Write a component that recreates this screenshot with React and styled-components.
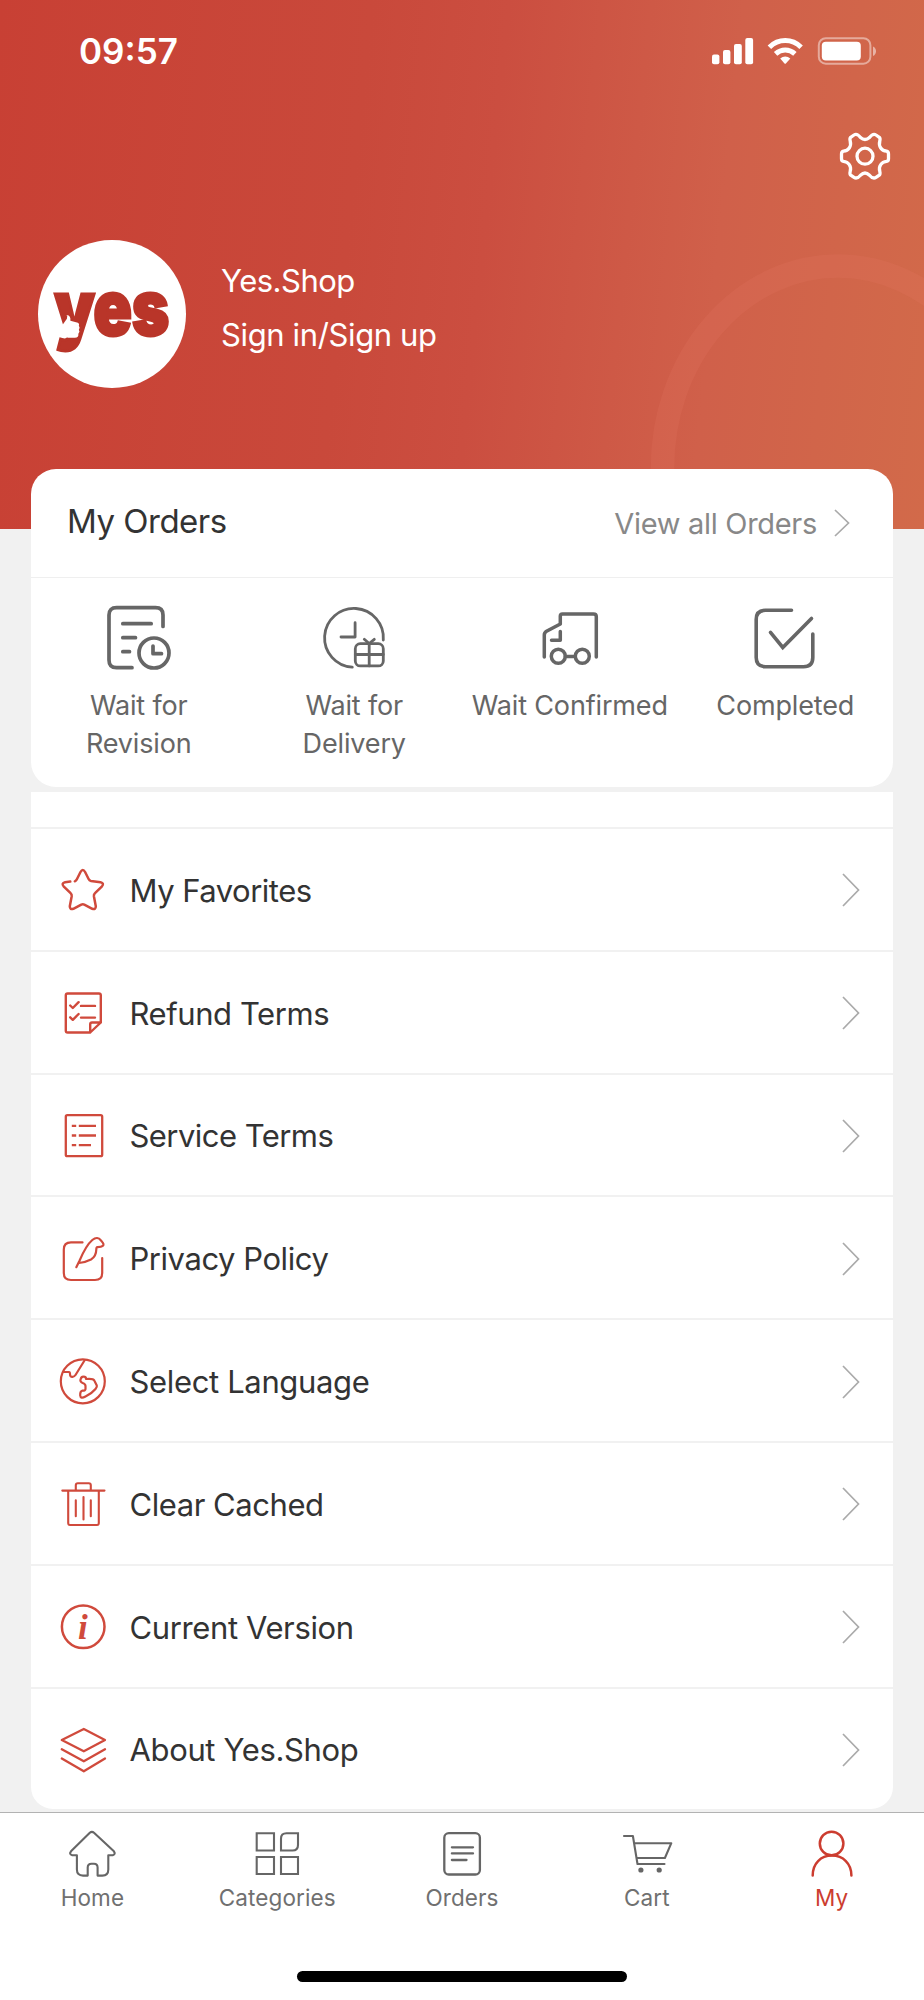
import React from 'react'
import styled, { createGlobalStyle } from 'styled-components'

const GlobalStyle = createGlobalStyle`
  * {
    box-sizing: border-box;
  }
  body {
    margin: 0;
    background: #f1f1f1;
    font-family: Inter, 'Liberation Sans', sans-serif;
  }
`

const Screen = styled.div`
  width: 924px;
  height: 2000px;
  display: flex;
  flex-direction: column;
  overflow: hidden;
  background: #f1f1f1;
`

const Header = styled.header`
  position: relative;
  flex: none;
  height: 529px;
  color: #fff;
  background: linear-gradient(96deg, #c84034 0%, #c9493b 38%, #cb4e40 52%, #d0604a 76%, #d26a4a 100%);
`

const Ring = styled.svg`
  position: absolute;
  right: 0;
  bottom: 0;
`

const StatusBar = styled.div`
  height: 101px;
  padding: 0 48px 0 79px;
  display: flex;
  align-items: center;
  justify-content: space-between;
`

const Time = styled.div`
  font-size: 35px;
  font-weight: 600;
  line-height: 42px;
`

const Toolbar = styled.div`
  display: flex;
  justify-content: flex-end;
  padding: 27px 31px 0 0;
  height: 139px;
`

const Profile = styled.div`
  display: flex;
  padding-left: 38px;
`

const Avatar = styled.div`
  width: 147.5px;
  height: 147.5px;
  border-radius: 50%;
  background: #fff;
`

const ProfileText = styled.div`
  padding: 14px 0 0 35.5px;
  font-size: 31px;
  line-height: 54px;
`

const Label = styled.div`
  letter-spacing: ${props => props.$spacing || 0}px;
  white-space: nowrap;
`

const Content = styled.main`
  position: relative;
  flex: none;
  margin-top: -60px;
  padding: 0 31px;
  height: 1343px;
`

const OrdersCard = styled.section`
  height: 318px;
  border-radius: 25px;
  background: #fff;
`

const OrdersHead = styled.div`
  height: 109px;
  padding: 0 43px 0 36px;
  display: flex;
  align-items: center;
  justify-content: space-between;
  border-bottom: 1px solid #efefef;
`

const OrdersTitle = styled.h2`
  margin: 0 0 5px;
  color: #333;
  font-size: 33px;
  font-weight: 400;
  letter-spacing: -0.5px;
`

const ViewAll = styled.div`
  display: flex;
  align-items: center;
  gap: 17px;
  color: #888;
  font-size: 29px;
`

const OrderGrid = styled.div`
  display: grid;
  grid-template-columns: repeat(4, 1fr);
  padding-top: 23px;
`

const OrderItem = styled.div`
  display: flex;
  flex-direction: column;
  align-items: center;
  gap: 14px;
  color: #666;
  font-size: 27px;
  line-height: 38px;
  letter-spacing: -0.15px;
  text-align: center;
  white-space: pre-line;
`

const Menu = styled.section`
  margin-top: 5px;
  padding-top: 35px;
  background: #fff;
  border-radius: 0 0 22px 22px;
`

const MenuRow = styled.div`
  height: 122.8px;
  padding: 2px 33px 0 28px;
  display: flex;
  align-items: center;
  border-top: 2px solid #f1f1f1;
  color: #333;
  font-size: 31px;

  svg:first-child {
    color: #d04a3c;
    margin-right: 22.5px;
  }
  svg:last-child {
    margin-left: auto;
  }
`

const TabBar = styled.nav`
  flex: none;
  display: grid;
  grid-template-columns: repeat(5, 1fr);
  height: 159px;
  border-top: 1px solid #b2b2b2;
  background: #fff;
`

const Tab = styled.div`
  display: flex;
  flex-direction: column;
  align-items: center;
  gap: 2px;
  padding-top: 15px;
  font-size: 22.5px;
  line-height: 31px;
  color: ${props => (props.$active ? '#cc3d30' : '#707070')};

  svg {
    color: ${props => (props.$active ? '#cc3d30' : '#666')};
  }
`

const HomeIndicator = styled.div`
  flex: none;
  height: 29px;
  background: #fff;

  &::before {
    content: '';
    display: block;
    width: 330px;
    height: 11px;
    margin: 0 auto;
    border-radius: 6px;
    background: #000;
  }
`

const Icon = ({ size, stroke, children }) => (
  <svg
    width={size}
    height={size}
    viewBox={`0 0 ${size} ${size}`}
    fill='none'
    stroke='currentColor'
    strokeWidth={stroke}
    strokeLinecap='round'
    strokeLinejoin='round'
  >
    {children}
  </svg>
)

const Chevron = ({ width, height, color }) => (
  <svg width={width} height={height} viewBox={`0 0 ${width} ${height}`} fill='none' stroke={color} strokeWidth='1.7'>
    <path d={`M1 1L${width - 1.5} ${height / 2}L1 ${height - 1}`} />
  </svg>
)

const StatusIcons = () => (
  <svg width='164' height='28' viewBox='0 0 164 28' fill='#fff'>
    <rect x='0' y='17.5' width='7.4' height='9.8' rx='2' />
    <rect x='11' y='13' width='7.4' height='14.3' rx='2' />
    <rect x='22' y='7' width='7.8' height='20.3' rx='2' />
    <rect x='33.3' y='1' width='7.8' height='26.3' rx='2' />
    <g fill='none' stroke='#fff' strokeWidth='5'>
      <path d='M57.4 10.2C66.5 1.3 80 1.3 89.1 10.2' />
      <path d='M63.6 16.8C69.2 11.6 77.3 11.6 82.9 16.8' />
    </g>
    <path d='M68.2 21.5C71.2 18.7 75.3 18.7 78.3 21.5L73.9 26.4Q73.2 27.1 72.5 26.4Z' />
    <rect x='106.8' y='1.2' width='51.6' height='25.5' rx='7' fill='none' stroke='#fff' strokeWidth='2' opacity='.45' />
    <rect x='109.8' y='4.8' width='39' height='18.6' rx='4' />
    <path d='M161 9.5C165 11 165 17.5 161 19Z' opacity='.5' />
  </svg>
)

const GearIcon = () => (
  <Icon size={56} stroke={3.3}>
    <circle cx='28' cy='28.2' r='8' />
    <path d='M23.5 9.5Q28 13.5 32.5 9.5Q36 5 39 7L42.3 9.3Q43.5 10.4 42.8 13C41.3 18.5 44.5 22.6 49.5 23.2Q51.5 23.7 51.5 26V30.7Q51.5 33 49.5 33.4C44.5 34 41.3 38 42.8 43.4Q43.5 46.2 42.3 47.2L39 49.4Q36 51.4 32.5 47.2Q28 43 23.5 47.2Q20 51.4 17 49.4L13.7 47.2Q12.5 46.2 13.2 43.4C14.7 38 11.5 34 6.5 33.4Q4.5 33 4.5 30.7V26Q4.5 23.7 6.5 23.2C11.5 22.6 14.7 18.5 13.2 13Q12.5 10.4 13.7 9.3L17 7Q20 5 23.5 9.5Z' />
  </Icon>
)

const Logo = () => (
  <svg width='147.5' height='147.5' viewBox='0 0 148 148'>
    <text
      x='16.500'
      y='95'
      textLength='115'
      lengthAdjust='spacingAndGlyphs'
      fill='#b93529'
      stroke='#b93529'
      strokeWidth='3'
      fontFamily='Inter'
      fontWeight='900'
      fontSize='76'
    >
      yes
    </text>
    {/* thumbs up cut out of the y */}
    <path
      fill='#fff'
      d='M16 88L24 86L29 79Q30 76 28.500 75.500Q33 75 32.500 81L40 83Q42 84 41 86Q42.500 88 41 90Q42.500 92 40.500 94Q41 98 37 98L30 98L24 95L16 96Z'
    />
  </svg>
)

const orders = [
  {
    label: 'Wait for\nRevision',
    icon: (
      <Icon size={72} stroke={3.7}>
        <path d='M60 25.500V14Q60 6.700 52.500 6.700H13.500Q6 6.700 6 14V59Q6 66.700 13.500 66.700H29M19.800 22.700H48.200M19.800 36.700H32.500M19.800 50.700H26.500' />
        <circle cx='51' cy='52' r='15' />
        <path d='M50 45V52.700H58.500' />
      </Icon>
    ),
  },
  {
    label: 'Wait for\nDelivery',
    icon: (
      <Icon size={72} stroke={2.8}>
        <path d='M65.300 39A29.400 29.400 0 1 0 34.300 66.200' />
        <path d='M37.100 21.700V36H23' />
        <rect x='37.300' y='42.700' width='28' height='22.200' rx='5' />
        <path d='M37.300 53.500H65.300M51.200 42.700V64.900M46.300 38.300L51.200 42.500L56.300 38.300' />
      </Icon>
    ),
  },
  {
    label: 'Wait Confirmed',
    icon: (
      <Icon size={72} stroke={3.5}>
        <path d='M10.300 56V34Q10.300 31.500 12.500 30.300L26.300 23V15Q26.300 12.900 28.500 12.900H59.500Q62.300 12.900 62.300 15.500V56' />
        <path d='M26.300 30.500V39.300H17.500M31.300 55.500H41.300' />
        <circle cx='24.300' cy='55.300' r='7' />
        <circle cx='48.300' cy='55.300' r='7' />
      </Icon>
    ),
  },
  {
    label: 'Completed',
    icon: (
      <Icon size={72} stroke={3.6}>
        <path d='M42.500 9.300H16.500Q7.200 9.300 7.200 18.500V56.500Q7.200 65.700 16.500 65.700H54.500Q63.800 65.700 63.800 56.500V33' />
        <path d='M21.500 31.300L33.800 46.500L62.500 17.500' strokeLinejoin='miter' />
      </Icon>
    ),
  },
]

const menu = [
  {
    label: 'My Favorites',
    spacing: -0.5,
    icon: (
      <Icon size={48} stroke={2.5}>
        <path d='M15.800 15.300Q17.300 14.700 18 13L21.500 6Q23.800 2 26.100 6L29.600 13Q30.300 14.700 32 15L41.500 16.300Q45.500 17.300 43 20.300L36 27.200Q34.600 28.500 34.900 30.300L36.800 40.200Q36.800 44 33.300 42.800L25.300 38.600Q23.800 37.900 22.300 38.600L14.300 42.800Q10.800 44 10.800 40.200L12.700 30.300Q13 28.500 11.600 27.200L4.600 20.300Q2.100 17.300 6.100 16.300L11.300 15.600' />
      </Icon>
    ),
  },
  {
    label: 'Refund Terms',
    spacing: -0.42,
    icon: (
      <Icon size={48} stroke={2.4}>
        <path d='M41.800 33.500V6.300Q41.800 4.500 40 4.500H8.600Q6.800 4.500 6.800 6.300V41.700Q6.800 43.500 8.600 43.500H31.200L41.800 33.500H33Q31.200 33.500 31.200 35.300V43.500' />
        <path d='M11.200 16.500L13.800 19L19.600 13.200M22 16.900H36M11.200 28.300L13.800 30.800L19.600 25M22 28.600H36' />
      </Icon>
    ),
  },
  {
    label: 'Service Terms',
    spacing: -0.55,
    icon: (
      <Icon size={48} stroke={2.3}>
        <rect x='6.800' y='3.200' width='36.400' height='41' rx='1.500' />
        <path strokeLinecap='butt' d='M12.800 13.800H17.200M19.800 13.800H37M12.800 23.500H17.200M19.800 23.500H37M12.800 33.200H17.200M19.800 33.200H32' />
      </Icon>
    ),
  },
  {
    label: 'Privacy Policy',
    spacing: -0.45,
    icon: (
      <Icon size={48} stroke={2.2}>
        <path d='M23.500 7.400H12Q4.800 7.400 4.800 14.500V38Q4.800 45 12 45H36Q43.200 45 43.200 38V23' />
        <path d='M17.300 32.200L20.500 25.700C24 17.500 28 9.500 33.300 5Q38.500 .8 42 5.500C44 8 45.500 9.500 43.800 10.800Q42.500 11.800 38.500 12.100Q37.300 12.300 37.300 14.500C37.200 20 34.500 23 32 24.500Q26.500 27.300 20 28' />
      </Icon>
    ),
  },
  {
    label: 'Select Language',
    spacing: -0.35,
    icon: (
      <Icon size={48} stroke={2.2}>
        <circle cx='23.800' cy='23.300' r='22' />
        <path d='M4.300 14H10Q11 14 11 16Q11 19 13.500 18.800Q15.500 18.600 16.500 17L25.500 2.500' />
        <path d='M23.700 25Q20.500 23.500 21.700 21Q22.500 18 25.300 18.700Q27 19 27 21Q34.300 20.300 35.300 22.500L37.800 27.500Q38.300 29 36.500 31Q33 35.300 26.500 38.500Q21.500 41.300 21.200 37.500Q21 33.200 23.500 32.700Q26.700 32.500 26.500 31V28Q26.500 26 23.700 25Z' />
      </Icon>
    ),
  },
  {
    label: 'Clear Cached',
    spacing: -0.45,
    icon: (
      <Icon size={48} stroke={2.1}>
        <path d='M3.300 10.600H45.500M16.800 10.600V5.300Q16.800 3.300 18.800 3.300H29.800Q31.800 3.300 31.800 5.300V10.600M9.200 11V43.300Q9.200 45 10.900 45H38.100Q39.800 45 39.800 43.300V11M16.800 20.300V36.300M24.500 17V39.500M31.800 20.300V36.300' />
      </Icon>
    ),
  },
  {
    label: 'Current Version',
    spacing: -0.38,
    icon: (
      <Icon size={48} stroke={2.5}>
        <circle cx='24.200' cy='23.800' r='21.300' />
        <text x='19' y='35.500' fill='currentColor' stroke='none' fontFamily='Liberation Serif, serif' fontStyle='italic' fontWeight='700' fontSize='35'>
          i
        </text>
      </Icon>
    ),
  },
  {
    label: 'About Yes.Shop',
    spacing: -0.36,
    icon: (
      <Icon size={48} stroke={2.3}>
        <path d='M24.800 3L46 14L24.800 25.300L2.800 14ZM2.800 23.200L24.800 35.300L46 23.200M2.800 32.500L24.800 45.300L46 32.500' />
      </Icon>
    ),
  },
]

const tabs = [
  {
    label: 'Home',
    icon: (
      <Icon size={52} stroke={2.1}>
        <path d='M10.900 27.300H6.300Q2.700 26.300 5 23.300L23.800 4.800Q25.900 2.900 28 4.800L47.900 23.300Q50 26.300 46.700 27.300H42.300V41.500Q42.300 47.600 36.300 47.600H31.600V39.500Q31.600 35.700 28 35.700H25.500Q21.700 35.700 21.700 39.500V47.600H17Q10.900 47.600 10.900 41.500Z' />
      </Icon>
    ),
  },
  {
    label: 'Categories',
    icon: (
      <Icon size={52} stroke={2.1}>
        <g strokeLinejoin='miter'>
          <path d='M5.700 5.200H23V22.500H5.700ZM5.700 29H23V46H5.700ZM30 29H47V46H30Z' />
          <path d='M35.500 5.200H47V17Q47 22.500 41.500 22.500H30V10.700Q30 5.200 35.500 5.200Z' />
        </g>
      </Icon>
    ),
  },
  {
    label: 'Orders',
    icon: (
      <Icon size={52} stroke={2.3}>
        <rect x='8.300' y='5.200' width='35.600' height='41.300' rx='4.500' />
        <path d='M15.900 19.300H37M15.900 25.400H37M15.900 32H30.500' />
      </Icon>
    ),
  },
  {
    label: 'Cart',
    icon: (
      <Icon size={52} stroke={2.1}>
        <path d='M3 8H11.900L16.500 36H43.500M13.200 15.200H50.300L43.900 30H15.700' />
        <circle cx='19.900' cy='42' r='2.600' fill='currentColor' stroke='none' />
        <circle cx='38.200' cy='42' r='2.600' fill='currentColor' stroke='none' />
      </Icon>
    ),
  },
  {
    label: 'My',
    active: true,
    icon: (
      <Icon size={52} stroke={2.5}>
        <circle cx='25.600' cy='15.500' r='11.800' />
        <path d='M6.700 47.500C6.700 35.500 14.700 27.600 25.900 27.600S45.400 35.500 45.400 47.500' />
      </Icon>
    ),
  },
]

const App = () => {
  return (
    <Screen>
      <GlobalStyle />
      <Header>
        <Ring width='290' height='290' viewBox='634 239 290 290' fill='none'>
          <path d='M662.500 529V468A175.500 202 0 0 1 838 266A175.500 202 0 0 1 1013.500 468V529' stroke='#e87a62' strokeOpacity='.2' strokeWidth='23.500' />
        </Ring>
        <StatusBar>
          <Time>09:57</Time>
          <StatusIcons />
        </StatusBar>
        <Toolbar>
          <GearIcon />
        </Toolbar>
        <Profile>
          <Avatar>
            <Logo />
          </Avatar>
          <ProfileText>
            <Label $spacing={-0.5}>Yes.Shop</Label>
            <Label $spacing={-0.37}>Sign in/Sign up</Label>
          </ProfileText>
        </Profile>
      </Header>

      <Content>
        <OrdersCard>
          <OrdersHead>
            <OrdersTitle>My Orders</OrdersTitle>
            <ViewAll>
              <Label $spacing={-0.3}>View all Orders</Label>
              <Chevron width={16} height={28} color='#aaa' />
            </ViewAll>
          </OrdersHead>
          <OrderGrid>
            {orders.map(item => (
              <OrderItem key={item.label}>
                {item.icon}
                <span>{item.label}</span>
              </OrderItem>
            ))}
          </OrderGrid>
        </OrdersCard>

        <Menu>
          {menu.map(item => (
            <MenuRow key={item.label}>
              {item.icon}
              <Label $spacing={item.spacing}>{item.label}</Label>
              <Chevron width={18} height={34} color='#aaa' />
            </MenuRow>
          ))}
        </Menu>
      </Content>

      <TabBar>
        {tabs.map(tab => (
          <Tab key={tab.label} $active={tab.active}>
            {tab.icon}
            <Label $spacing={0.1}>{tab.label}</Label>
          </Tab>
        ))}
      </TabBar>
      <HomeIndicator />
    </Screen>
  )
}

export default App
